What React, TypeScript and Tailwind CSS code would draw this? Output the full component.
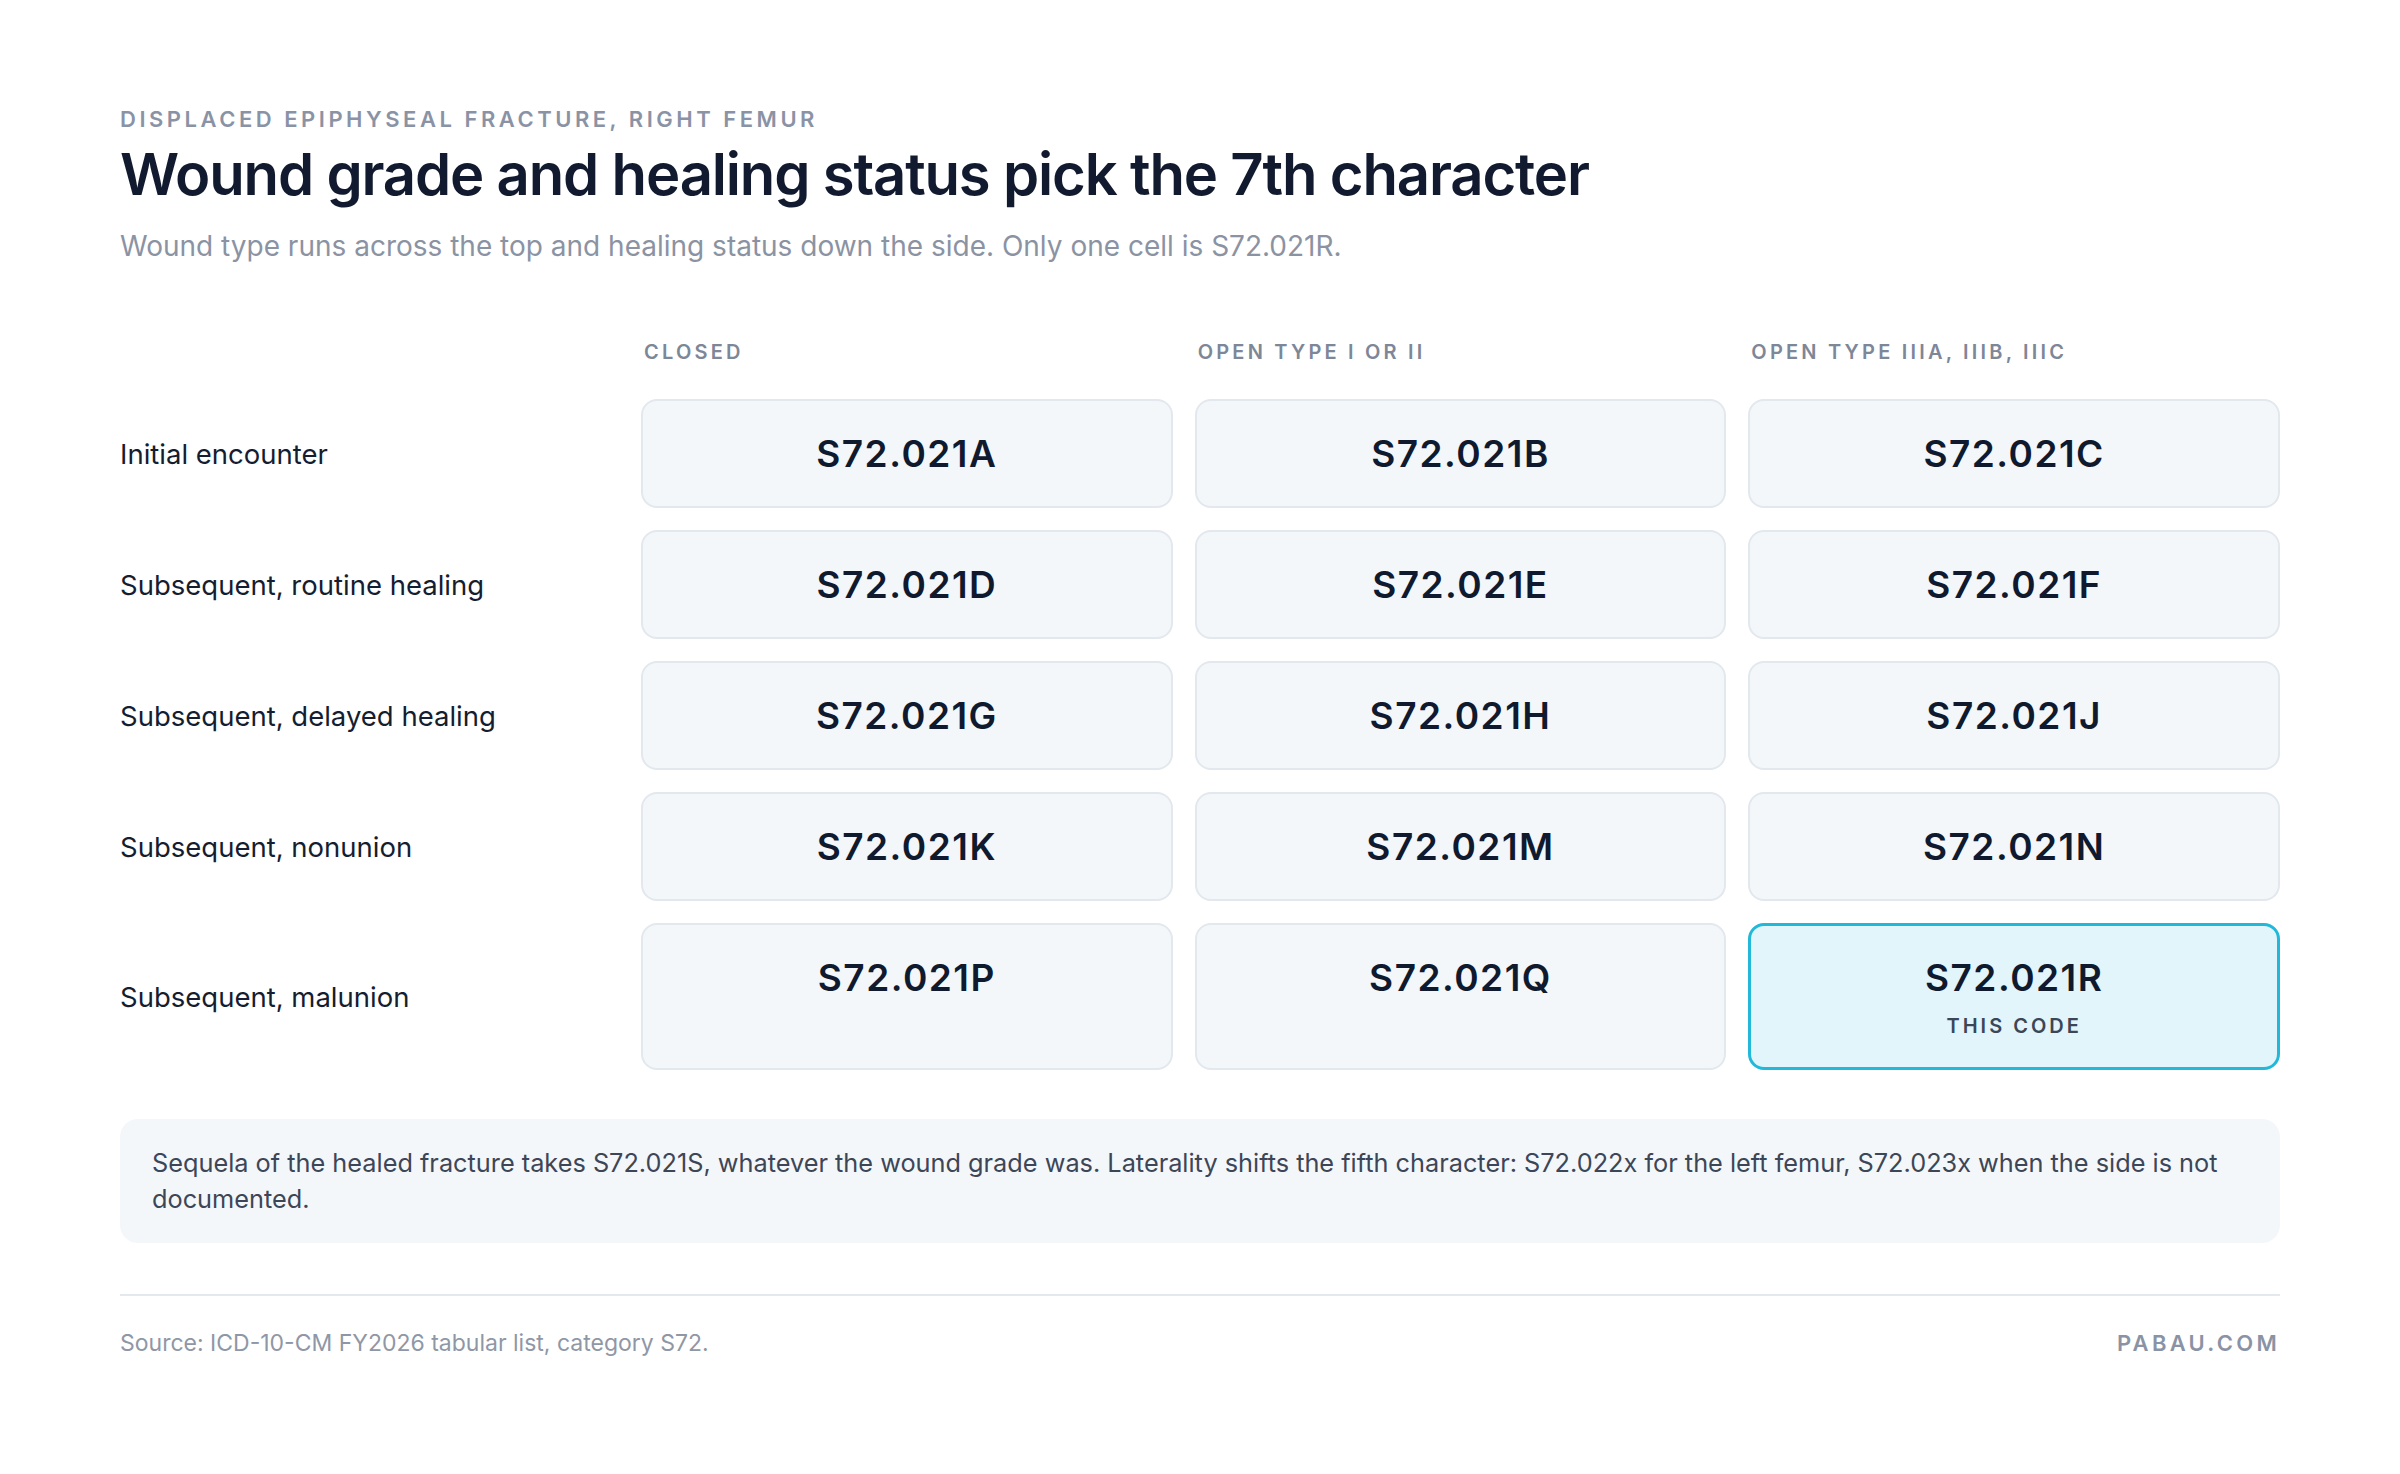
const rows = [
  { label: "Initial encounter", codes: ["S72.021A", "S72.021B", "S72.021C"] },
  { label: "Subsequent, routine healing", codes: ["S72.021D", "S72.021E", "S72.021F"] },
  { label: "Subsequent, delayed healing", codes: ["S72.021G", "S72.021H", "S72.021J"] },
  { label: "Subsequent, nonunion", codes: ["S72.021K", "S72.021M", "S72.021N"] },
  { label: "Subsequent, malunion", codes: ["S72.021P", "S72.021Q", "S72.021R"] },
];

const columns = ["Closed", "Open type I or II", "Open type IIIA, IIIB, IIIC"];

const CURRENT = "S72.021R";

const CodeCell = ({ code }: { code: string }) => {
  const active = code === CURRENT;
  return (
    <div
      className={
        active
          ? "flex flex-col items-center rounded-[16px] border-[3px] border-[#22b8d9] bg-[#e1f5fa] pt-[30px] pb-[29px]"
          : "flex flex-col items-center rounded-[16px] border-2 border-[#e3e8ee] bg-[#f3f7fa] pt-[31px] pb-[30px]"
      }
    >
      <span className="text-[37px] leading-[44px] font-semibold tracking-[0.04em] text-[#101a2f]">{code}</span>
      {active && (
        <span className="mt-[14px] text-[20px] leading-[24px] font-semibold tracking-[0.15em] text-[#3b4656] uppercase">
          This code
        </span>
      )}
    </div>
  );
};

export default function App() {
  return (
    <div className="min-h-screen bg-white font-['Inter',sans-serif]">
      <div className="mx-[120px] pt-[106px]">
        <p className="text-[22px] leading-[26px] font-semibold tracking-[0.16em] text-[#8a93a5] uppercase">
          Displaced epiphyseal fracture, right femur
        </p>
        <h1 className="mt-[8px] text-[58px] leading-[68px] font-semibold tracking-[-0.02em] text-[#111a2e]">
          Wound grade and healing status pick the 7th character
        </h1>
        <p className="mt-[20px] text-[28px] leading-[36px] text-[#8b93a3]">
          Wound type runs across the top and healing status down the side. Only one cell is S72.021R.
        </p>

        <div className="mt-[76px] grid grid-cols-[499px_1fr_1fr_1fr] gap-x-[22px]">
          <div />
          {columns.map((c) => (
            <div
              key={c}
              className="pl-[3px] text-[20px] leading-[24px] font-semibold tracking-[0.16em] text-[#7d8798] uppercase"
            >
              {c}
            </div>
          ))}
        </div>

        <div className="mt-[35px] grid grid-cols-[499px_1fr_1fr_1fr] gap-x-[22px] gap-y-[22px]">
          {rows.map((r) => (
            <div key={r.label} className="contents">
              <div className="flex items-center text-[27.5px] leading-[36px] text-[#151d31]">{r.label}</div>
              {r.codes.map((code) => (
                <CodeCell key={code} code={code} />
              ))}
            </div>
          ))}
        </div>

        <div className="mt-[49px] rounded-[18px] bg-[#f4f7fa] px-[32px] py-[26px] text-[25.3px] leading-[36px] text-[#3d4657]">
          Sequela of the healed fracture takes S72.021S, whatever the wound grade was. Laterality shifts the fifth
          character: S72.022x for the left femur, S72.023x when the side is not documented.
        </div>

        <div className="mt-[51px] border-t-2 border-[#e4e9ee] pt-[33px] flex items-center justify-between">
          <span className="text-[23px] leading-[28px] text-[#8f97a6]">
            Source: ICD-10-CM FY2026 tabular list, category S72.
          </span>
          <span className="text-[22px] leading-[28px] font-semibold tracking-[0.15em] text-[#8a93a5]">PABAU.COM</span>
        </div>
      </div>
    </div>
  );
}
